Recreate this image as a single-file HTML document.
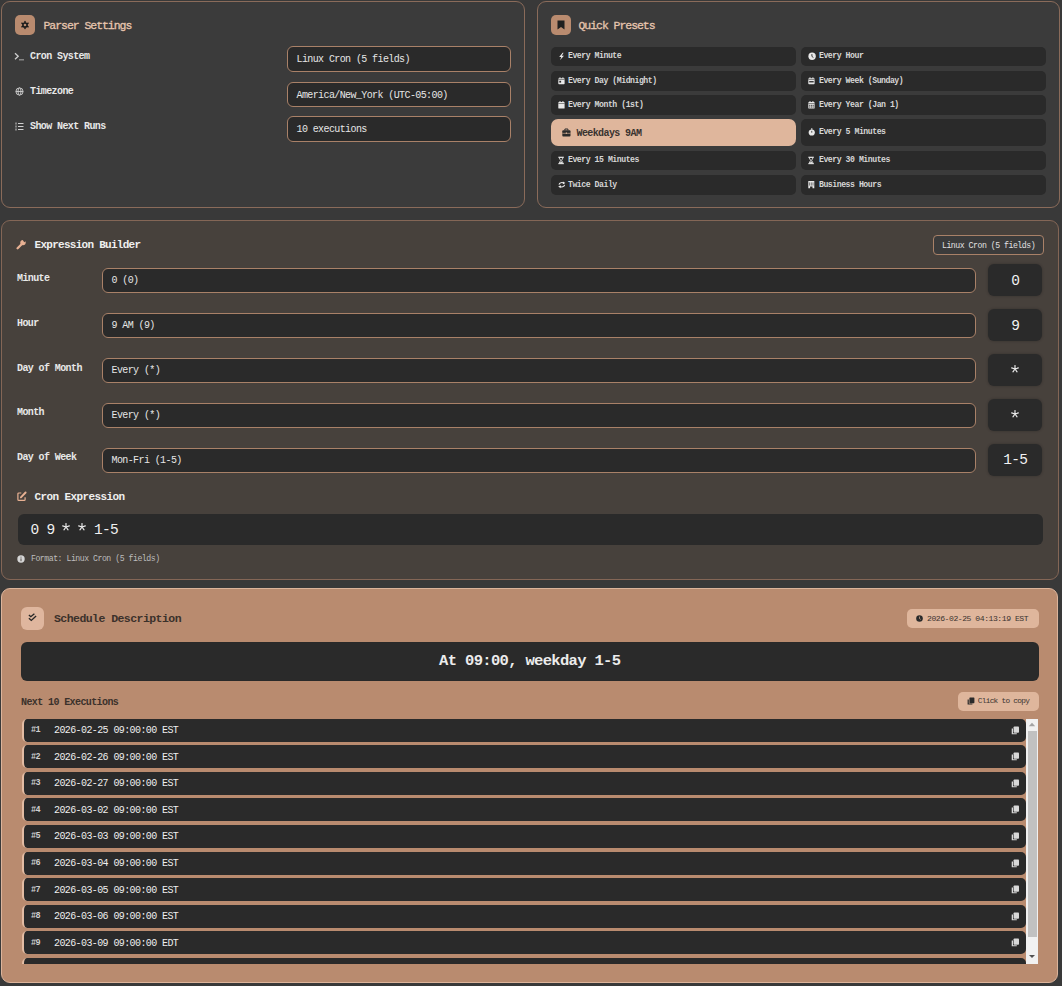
<!DOCTYPE html>
<html><head><meta charset="utf-8">
<style>
*{box-sizing:border-box;margin:0;padding:0}
html,body{width:1062px;height:986px;overflow:hidden;background:#393939}
body{position:relative;font-family:"Liberation Mono", monospace;color:#e6e6e6}
.a{position:absolute;white-space:nowrap}
.panel{position:absolute;border:1px solid #8a6b5a;border-radius:9px;background:#3b3b3b}
.ibox{position:absolute;width:20px;height:20px;border-radius:5px;background:#b98b6f}
.ibox svg{position:absolute}
.title{position:absolute;font-size:11.5px;line-height:12px;letter-spacing:-1.05px;color:#e6c5ae;-webkit-text-stroke:0.3px #e6c5ae;white-space:nowrap}
.lbl{position:absolute;font-size:10px;line-height:11px;letter-spacing:-0.6px;font-weight:bold;color:#e8e8e8;white-space:nowrap}
.inp{position:absolute;background:#2a2a2a;border:1px solid #a98168;border-radius:6px;white-space:nowrap}
.inp span{position:absolute;font-size:10px;line-height:11px;letter-spacing:-0.6px;color:#e6e6e6}
.pb{position:absolute;background:#2a2a2a;border-radius:5px;white-space:nowrap}
.pb span{position:absolute;font-size:8.2px;line-height:9px;letter-spacing:-0.48px;font-weight:bold;color:#d6d6d6}
.pb svg{position:absolute}
.val{position:absolute;background:#2a2a2a;border-radius:6px;width:54.4px;height:31.8px;box-shadow:0 0 2px 1px rgba(0,0,0,.12)}
.val span{position:absolute;left:0;width:54.4px;text-align:center;font-size:14.5px;line-height:16px;letter-spacing:-0.75px;color:#f2f2f2}
.item{position:absolute;left:21.5px;width:1004.5px;height:23px;background:#2a2a2a;border-radius:5px;border-left:2px solid #e3bca3}
.item .n{position:absolute;left:7.5px;top:7.5px;font-size:8.5px;line-height:9px;letter-spacing:-0.6px;font-weight:bold;color:#cfcfcf}
.item .d{position:absolute;left:30.5px;top:6.5px;font-size:10px;line-height:11px;letter-spacing:-0.6px;color:#eeeeee}
.item svg{position:absolute;left:987px;top:7px}
</style></head><body>
<div class="panel" style="left:1px;top:1px;width:524px;height:207px"></div>
<div class="ibox" style="left:15px;top:15px"><svg style="left:5px;top:5px" width="10" height="10" viewBox="0 0 10 10"><g fill="#1c1c1c"><rect x="4.3" y="0.9" width="1.4" height="2.2" transform="rotate(0 5 5)"/><rect x="4.3" y="0.9" width="1.4" height="2.2" transform="rotate(60 5 5)"/><rect x="4.3" y="0.9" width="1.4" height="2.2" transform="rotate(120 5 5)"/><rect x="4.3" y="0.9" width="1.4" height="2.2" transform="rotate(180 5 5)"/><rect x="4.3" y="0.9" width="1.4" height="2.2" transform="rotate(240 5 5)"/><rect x="4.3" y="0.9" width="1.4" height="2.2" transform="rotate(300 5 5)"/></g><circle cx="5" cy="5" r="2.1" fill="none" stroke="#1c1c1c" stroke-width="1.5"/></svg></div>
<div class="title" style="left:43.5px;top:19.5px">Parser Settings</div>
<svg class="a" style="left:14px;top:52px" width="11" height="9" viewBox="0 0 11 9"><path d="M1 1.2l3.2 3L1 7.2" fill="none" stroke="#cfcfcf" stroke-width="1.3"/><rect x="5" y="7.2" width="5" height="1.2" fill="#9a9a9a"/></svg>
<svg class="a" style="left:14.5px;top:86.5px" width="9" height="9" viewBox="0 0 9 9"><g fill="none" stroke="#d0d0d0" stroke-width="0.9"><circle cx="4.5" cy="4.5" r="3.6"/><ellipse cx="4.5" cy="4.5" rx="1.5" ry="3.6"/><path d="M0.9 4.5h7.2"/></g></svg>
<svg class="a" style="left:14.5px;top:121.5px" width="9" height="9" viewBox="0 0 9 9"><g fill="#cfcfcf"><rect x="0.5" y="0.5" width="1" height="2"/><rect x="0.5" y="3.5" width="1" height="2"/><rect x="0.5" y="6.5" width="1" height="2"/><rect x="3" y="1" width="5.5" height="1"/><rect x="3" y="4" width="5.5" height="1"/><rect x="3" y="7" width="5.5" height="1"/></g></svg>
<div class="lbl" style="left:30px;top:51px">Cron System</div>
<div class="lbl" style="left:30px;top:86px">Timezone</div>
<div class="lbl" style="left:30px;top:121px">Show Next Runs</div>
<div class="inp" style="left:287px;top:46px;width:224px;height:26px"><span style="left:8.5px;top:7.0px">Linux Cron (5 fields)</span></div>
<div class="inp" style="left:287px;top:82px;width:224px;height:25px"><span style="left:8.5px;top:6.5px">America/New_York (UTC-05:00)</span></div>
<div class="inp" style="left:287px;top:116px;width:224px;height:26px"><span style="left:8.5px;top:7.0px">10 executions</span></div>
<div class="panel" style="left:537px;top:1px;width:522.5px;height:207px"></div>
<div class="ibox" style="left:551px;top:15px"><svg style="left:6px;top:5px" width="8" height="10" viewBox="0 0 8 10"><path d="M0.5 0.5h7v9L4 7 0.5 9.5z" fill="#1f1f1f"/></svg></div>
<div class="title" style="left:578.5px;top:19.5px">Quick Presets</div>
<div class="pb" style="left:551px;top:46.5px;width:245px;height:19.5px"><svg style="left:7px;top:5.55px" width="8" height="9" viewBox="0 0 8 9"><path d="M4.6 0.8L1.2 4.9h2.1L2.1 8l3.9-4.3H3.8L5.6 0.8z" fill="#e8e8e8"/></svg><span style="left:17px;top:4.55px">Every Minute</span></div>
<div class="pb" style="left:801px;top:46.5px;width:245px;height:19.5px"><svg style="left:7px;top:5.55px" width="8" height="9" viewBox="0 0 8 9"><circle cx="4.1" cy="4.2" r="3.7" fill="#e8e8e8"/><path d="M3.9 2.1v2.3l1.5 1.1" stroke="#2a2a2a" stroke-width="0.9" fill="none"/></svg><span style="left:18px;top:4.55px">Every Hour</span></div>
<div class="pb" style="left:551px;top:71px;width:245px;height:19.5px"><svg style="left:7px;top:5.55px" width="8" height="9" viewBox="0 0 8 9"><rect x="0.3" y="1.2" width="6.3" height="6" rx="0.7" fill="#e8e8e8"/><rect x="1.5" y="0.35" width="1" height="1.4" fill="#e8e8e8"/><rect x="4.4" y="0.35" width="1" height="1.4" fill="#e8e8e8"/><rect x="0.3" y="2.5" width="6.3" height="0.5" fill="#2a2a2a"/><rect x="1.3" y="3.8" width="1.8" height="1.8" fill="#2a2a2a"/></svg><span style="left:17px;top:4.55px">Every Day (Midnight)</span></div>
<div class="pb" style="left:801px;top:71px;width:245px;height:19.5px"><svg style="left:7px;top:5.55px" width="8" height="9" viewBox="0 0 8 9"><rect x="0.3" y="1.2" width="6.3" height="6" rx="0.7" fill="#e8e8e8"/><rect x="1.5" y="0.35" width="1" height="1.4" fill="#e8e8e8"/><rect x="4.4" y="0.35" width="1" height="1.4" fill="#e8e8e8"/><rect x="0.3" y="2.5" width="6.3" height="0.5" fill="#2a2a2a"/><rect x="1.2" y="4.1" width="4.5" height="1.3" fill="#2a2a2a"/></svg><span style="left:18px;top:4.55px">Every Week (Sunday)</span></div>
<div class="pb" style="left:551px;top:95.25px;width:245px;height:19.5px"><svg style="left:7px;top:5.55px" width="8" height="9" viewBox="0 0 8 9"><rect x="0.3" y="1.0" width="6.3" height="6.6" rx="0.7" fill="#e8e8e8"/><rect x="1.5" y="0.1" width="1" height="1.4" fill="#e8e8e8"/><rect x="4.4" y="0.1" width="1" height="1.4" fill="#e8e8e8"/><rect x="0.3" y="2.4" width="6.3" height="0.5" fill="#2a2a2a"/></svg><span style="left:17px;top:4.55px">Every Month (1st)</span></div>
<div class="pb" style="left:801px;top:95.25px;width:245px;height:19.5px"><svg style="left:7px;top:5.55px" width="8" height="9" viewBox="0 0 8 9"><rect x="0.3" y="1.0" width="6.3" height="6.6" rx="0.7" fill="#e8e8e8"/><rect x="1.5" y="0.1" width="1" height="1.4" fill="#e8e8e8"/><rect x="4.4" y="0.1" width="1" height="1.4" fill="#e8e8e8"/><rect x="0.3" y="2.4" width="6.3" height="0.5" fill="#2a2a2a"/><path d="M1.1 4.3h1.2M2.9 4.3h1.2M4.6 4.3h1.2M1.1 6h1.2M2.9 6h1.2M4.6 6h1.2" stroke="#2a2a2a" stroke-width="0.9"/></svg><span style="left:18px;top:4.55px">Every Year (Jan 1)</span></div>
<div class="pb" style="left:551px;top:119.2px;width:245px;height:26.8px;background:#dfb69c;border-radius:7px"><svg style="left:10.5px;top:8.5px" width="9" height="9" viewBox="0 0 9 9"><rect x="0.3" y="2.3" width="8.2" height="6.2" rx="0.9" fill="#2b2b2b"/><path d="M2.9 2.5V1h3v1.5" fill="none" stroke="#2b2b2b" stroke-width="1"/><rect x="0.3" y="4.9" width="8.2" height="0.6" fill="#dfb69c"/><rect x="3.8" y="4.5" width="1.2" height="1.3" fill="#dfb69c"/></svg><span style="left:25.5px;top:9px;font-size:10px;line-height:11px;letter-spacing:-0.6px;color:#3a3330">Weekdays 9AM</span></div>
<div class="pb" style="left:801px;top:119.2px;width:245px;height:26.8px"><svg style="left:7px;top:9.200000000000001px" width="8" height="9" viewBox="0 0 8 9"><circle cx="3.75" cy="4.5" r="3.1" fill="#e8e8e8"/><rect x="3.1" y="0.3" width="1.3" height="1.4" fill="#e8e8e8"/><path d="M3.75 2.9v1.8" stroke="#2a2a2a" stroke-width="0.8"/></svg><span style="left:18px;top:8.200000000000001px">Every 5 Minutes</span></div>
<div class="pb" style="left:551px;top:150.5px;width:245px;height:19.5px"><svg style="left:7px;top:5.55px" width="8" height="9" viewBox="0 0 8 9"><path d="M0.3 1.2h5.6M0.3 7.7h5.6" stroke="#e8e8e8" stroke-width="0.9"/><path d="M1 1.5h4.2L3.6 4.4l1.6 3H1l1.6-3z" fill="none" stroke="#e8e8e8" stroke-width="0.85"/><path d="M1.6 7.2l1.5-2 1.5 2z" fill="#e8e8e8"/></svg><span style="left:17px;top:4.55px">Every 15 Minutes</span></div>
<div class="pb" style="left:801px;top:150.5px;width:245px;height:19.5px"><svg style="left:7px;top:5.55px" width="8" height="9" viewBox="0 0 8 9"><path d="M0.3 1.2h5.6M0.3 7.7h5.6" stroke="#e8e8e8" stroke-width="0.9"/><path d="M1 1.5h4.2L3.6 4.4l1.6 3H1l1.6-3z" fill="none" stroke="#e8e8e8" stroke-width="0.85"/><path d="M1.6 7.2l1.5-2 1.5 2z" fill="#e8e8e8"/></svg><span style="left:18px;top:4.55px">Every 30 Minutes</span></div>
<div class="pb" style="left:551px;top:175px;width:245px;height:19.5px"><svg style="left:7px;top:5.55px" width="8" height="9" viewBox="0 0 8 9"><path d="M1 3.6A2.9 2.5 0 0 1 5.9 2.3M6.6 3.9A2.9 2.5 0 0 1 1.7 5.2" fill="none" stroke="#e8e8e8" stroke-width="1.1"/><path d="M4.9 0.4l2.5 1.6-2.5 1.3zM2.7 7.2L0.2 5.6l2.5-1.3z" fill="#e8e8e8"/></svg><span style="left:17px;top:4.55px">Twice Daily</span></div>
<div class="pb" style="left:801px;top:175px;width:245px;height:19.5px"><svg style="left:7px;top:5.55px" width="8" height="9" viewBox="0 0 8 9"><path d="M0.3 0.1h6v7.1h-1.8v-1.6h-2.4v1.6H0.3z" fill="#e8e8e8"/><path d="M1.6 1.4v3.2M3.3 1.4v3.2M5 1.4v3.2" stroke="#2a2a2a" stroke-width="0.6"/></svg><span style="left:18px;top:4.55px">Business Hours</span></div>
<div class="panel" style="left:1px;top:219.5px;width:1058px;height:360.5px;background:#47413c;border-color:#846656"></div>
<svg class="a" style="left:16px;top:238.5px" width="11" height="11" viewBox="0 0 11 11"><path d="M1.6 9.2L5.6 5.2" stroke="#e8b193" stroke-width="2.3" stroke-linecap="round"/><circle cx="7" cy="3.6" r="2.7" fill="#e8b193"/><rect x="7.4" y="0.2" width="2.4" height="2.6" transform="rotate(45 8.6 1.5)" fill="#47413c"/></svg>
<div class="a" style="left:34.5px;top:239px;font-size:11px;line-height:12px;letter-spacing:-0.72px;font-weight:bold;color:#efefef">Expression Builder</div>
<div class="inp" style="left:933px;top:235px;width:111.2px;height:20px;background:#3b3b3b;border-radius:4px"><span style="left:8px;top:4.5px;font-size:8.2px;line-height:9px;letter-spacing:-0.48px;color:#e2e2e2">Linux Cron (5 fields)</span></div>
<div class="lbl" style="left:17px;top:272.75px">Minute</div>
<div class="inp" style="left:102px;top:267.95px;width:874px;height:25.4px"><span style="left:8.5px;top:6.5px">0 (0)</span></div>
<div class="val" style="left:988px;top:264.45px"><span style="top:8.3px">0</span></div>
<div class="lbl" style="left:17px;top:317.65px">Hour</div>
<div class="inp" style="left:102px;top:312.84999999999997px;width:874px;height:25.4px"><span style="left:8.5px;top:6.5px">9 AM (9)</span></div>
<div class="val" style="left:988px;top:309.34999999999997px"><span style="top:8.3px">9</span></div>
<div class="lbl" style="left:17px;top:362.55px">Day of Month</div>
<div class="inp" style="left:102px;top:357.75px;width:874px;height:25.4px"><span style="left:8.5px;top:6.5px">Every (*)</span></div>
<div class="val" style="left:988px;top:354.25px"><svg style="position:absolute;left:22.8px;top:10.5px" width="8" height="8" viewBox="0 0 8 8"><path d="M4 4L4 0.5M4 4L7.33 2.92M4 4L6.06 6.83M4 4L1.94 6.83M4 4L0.67 2.92" stroke="#eeeeee" stroke-width="1.15" stroke-linecap="round"/></svg></div>
<div class="lbl" style="left:17px;top:407.45px">Month</div>
<div class="inp" style="left:102px;top:402.65px;width:874px;height:25.4px"><span style="left:8.5px;top:6.5px">Every (*)</span></div>
<div class="val" style="left:988px;top:399.15px"><svg style="position:absolute;left:22.8px;top:10.5px" width="8" height="8" viewBox="0 0 8 8"><path d="M4 4L4 0.5M4 4L7.33 2.92M4 4L6.06 6.83M4 4L1.94 6.83M4 4L0.67 2.92" stroke="#eeeeee" stroke-width="1.15" stroke-linecap="round"/></svg></div>
<div class="lbl" style="left:17px;top:452.35px">Day of Week</div>
<div class="inp" style="left:102px;top:447.55px;width:874px;height:25.4px"><span style="left:8.5px;top:6.5px">Mon-Fri (1-5)</span></div>
<div class="val" style="left:988px;top:444.05px"><span style="top:8.3px">1-5</span></div>
<svg class="a" style="left:16.5px;top:490.5px" width="10" height="10" viewBox="0 0 10 10"><path d="M4.3 2H1.8A0.9 0.9 0 0 0 0.9 2.9V8.5A0.9 0.9 0 0 0 1.8 9.4H7.2A0.9 0.9 0 0 0 8.1 8.5V6.2" fill="none" stroke="#e8b193" stroke-width="1.2"/><path d="M3.9 6.4L8.6 1.5" stroke="#e8b193" stroke-width="1.9" stroke-linecap="round"/></svg>
<div class="a" style="left:34.5px;top:490.5px;font-size:11px;line-height:12px;letter-spacing:-0.6px;font-weight:bold;color:#efefef">Cron Expression</div>
<div class="a" style="left:18px;top:513.5px;width:1025px;height:31.5px;background:#2a2a2a;border-radius:6px"></div>
<div class="a" style="left:30.5px;top:521.5px;font-size:14.5px;line-height:16px;letter-spacing:-0.75px;color:#f0f0f0">0 9 &nbsp; &nbsp; 1-5</div>
<div class="a" style="left:62.4px;top:523.2px;width:8px;height:8px"><svg style="position:absolute;left:0px;top:0px" width="8" height="8" viewBox="0 0 8 8"><path d="M4 4L4 0.5M4 4L7.33 2.92M4 4L6.06 6.83M4 4L1.94 6.83M4 4L0.67 2.92" stroke="#eeeeee" stroke-width="1.15" stroke-linecap="round"/></svg></div>
<div class="a" style="left:78.1px;top:523.2px;width:8px;height:8px"><svg style="position:absolute;left:0px;top:0px" width="8" height="8" viewBox="0 0 8 8"><path d="M4 4L4 0.5M4 4L7.33 2.92M4 4L6.06 6.83M4 4L1.94 6.83M4 4L0.67 2.92" stroke="#eeeeee" stroke-width="1.15" stroke-linecap="round"/></svg></div>
<svg class="a" style="left:16.5px;top:555.4px" width="8" height="8" viewBox="0 0 8 8"><circle cx="4" cy="4" r="3.7" fill="#d6d6d6"/><rect x="3.55" y="3.4" width="0.9" height="2.8" fill="#47413c"/><rect x="3.55" y="1.7" width="0.9" height="0.9" fill="#47413c"/></svg>
<div class="a" style="left:31px;top:554px;font-size:8.2px;line-height:9px;letter-spacing:-0.48px;color:#bdbdbd">Format: Linux Cron (5 fields)</div>
<div class="panel" style="left:1px;top:587.5px;width:1057px;height:395.8px;background:#b98b6f;border-color:#dcb49b"></div>
<div class="a" style="left:21px;top:607px;width:23px;height:23px;border-radius:6px;background:#dfb69e"></div>
<svg class="a" style="left:28.2px;top:613px" width="9" height="9" viewBox="0 0 9 9"><path d="M0.9 2l1.9 1.7L6.4 0.7M0.9 5.2l2.4 2.2L8.1 3" fill="none" stroke="#262626" stroke-width="1.35"/></svg>
<div class="a" style="left:54px;top:613px;font-size:11.5px;line-height:12px;letter-spacing:-0.55px;font-weight:bold;color:#3b312b">Schedule Description</div>
<div class="a" style="left:907px;top:609px;width:131.5px;height:19.4px;border-radius:5px;background:#dfb69c"></div>
<svg class="a" style="left:916px;top:615px" width="7" height="7" viewBox="0 0 7 7"><circle cx="3.5" cy="3.5" r="3.3" fill="#2a2a2a"/><path d="M3.5 1.6v2l1.2 0.8" stroke="#dfb69c" stroke-width="0.7" fill="none"/></svg>
<div class="a" style="left:927px;top:614px;font-size:8.1px;line-height:9px;letter-spacing:-0.46px;color:#3b3430">2026-02-25 04:13:19 EST</div>
<div class="a" style="left:21px;top:641.5px;width:1017.5px;height:39px;background:#2a2a2a;border-radius:6px;border:1px solid rgba(40,40,40,.55)"></div>
<div class="a" style="left:21px;top:653px;width:1017.5px;text-align:center;font-size:15.5px;line-height:16px;letter-spacing:-0.67px;font-weight:bold;color:#ececec">At 09:00, weekday 1-5</div>
<div class="a" style="left:21px;top:697px;font-size:10px;line-height:11px;letter-spacing:-0.6px;font-weight:bold;color:#3b312b">Next 10 Executions</div>
<div class="a" style="left:958px;top:692px;width:80.5px;height:18.5px;border-radius:5px;background:#dfb69c"></div>
<svg class="a" style="left:967px;top:697px" width="8" height="8" viewBox="0 0 8 8"><path d="M0.6 2.4h1.2v4.2h3.6v1H0.6z" fill="#2a2a2a"/><rect x="2.4" y="0.4" width="5" height="5.8" rx="0.6" fill="#2a2a2a"/></svg>
<div class="a" style="left:977.8px;top:697.2px;font-size:7.8px;line-height:8px;letter-spacing:-0.73px;color:#3b3430">Click to copy</div>
<div class="a" style="left:0;top:718.5px;width:1062px;height:245.5px;overflow:hidden">
<div class="item" style="top:0.0px"><span class="n">#1</span><span class="d">2026-02-25 09:00:00 EST</span><svg width="9" height="9" viewBox="0 0 9 9"><path d="M0.7 2.6h1.3v4.6h3.8v1.1H0.7z" fill="#d8d8d8"/><rect x="2.6" y="0.5" width="5.4" height="6.2" rx="0.8" fill="#d8d8d8"/></svg></div>
<div class="item" style="top:26.6px"><span class="n">#2</span><span class="d">2026-02-26 09:00:00 EST</span><svg width="9" height="9" viewBox="0 0 9 9"><path d="M0.7 2.6h1.3v4.6h3.8v1.1H0.7z" fill="#d8d8d8"/><rect x="2.6" y="0.5" width="5.4" height="6.2" rx="0.8" fill="#d8d8d8"/></svg></div>
<div class="item" style="top:53.2px"><span class="n">#3</span><span class="d">2026-02-27 09:00:00 EST</span><svg width="9" height="9" viewBox="0 0 9 9"><path d="M0.7 2.6h1.3v4.6h3.8v1.1H0.7z" fill="#d8d8d8"/><rect x="2.6" y="0.5" width="5.4" height="6.2" rx="0.8" fill="#d8d8d8"/></svg></div>
<div class="item" style="top:79.80000000000001px"><span class="n">#4</span><span class="d">2026-03-02 09:00:00 EST</span><svg width="9" height="9" viewBox="0 0 9 9"><path d="M0.7 2.6h1.3v4.6h3.8v1.1H0.7z" fill="#d8d8d8"/><rect x="2.6" y="0.5" width="5.4" height="6.2" rx="0.8" fill="#d8d8d8"/></svg></div>
<div class="item" style="top:106.4px"><span class="n">#5</span><span class="d">2026-03-03 09:00:00 EST</span><svg width="9" height="9" viewBox="0 0 9 9"><path d="M0.7 2.6h1.3v4.6h3.8v1.1H0.7z" fill="#d8d8d8"/><rect x="2.6" y="0.5" width="5.4" height="6.2" rx="0.8" fill="#d8d8d8"/></svg></div>
<div class="item" style="top:133.0px"><span class="n">#6</span><span class="d">2026-03-04 09:00:00 EST</span><svg width="9" height="9" viewBox="0 0 9 9"><path d="M0.7 2.6h1.3v4.6h3.8v1.1H0.7z" fill="#d8d8d8"/><rect x="2.6" y="0.5" width="5.4" height="6.2" rx="0.8" fill="#d8d8d8"/></svg></div>
<div class="item" style="top:159.60000000000002px"><span class="n">#7</span><span class="d">2026-03-05 09:00:00 EST</span><svg width="9" height="9" viewBox="0 0 9 9"><path d="M0.7 2.6h1.3v4.6h3.8v1.1H0.7z" fill="#d8d8d8"/><rect x="2.6" y="0.5" width="5.4" height="6.2" rx="0.8" fill="#d8d8d8"/></svg></div>
<div class="item" style="top:186.20000000000002px"><span class="n">#8</span><span class="d">2026-03-06 09:00:00 EST</span><svg width="9" height="9" viewBox="0 0 9 9"><path d="M0.7 2.6h1.3v4.6h3.8v1.1H0.7z" fill="#d8d8d8"/><rect x="2.6" y="0.5" width="5.4" height="6.2" rx="0.8" fill="#d8d8d8"/></svg></div>
<div class="item" style="top:212.8px"><span class="n">#9</span><span class="d">2026-03-09 09:00:00 EDT</span><svg width="9" height="9" viewBox="0 0 9 9"><path d="M0.7 2.6h1.3v4.6h3.8v1.1H0.7z" fill="#d8d8d8"/><rect x="2.6" y="0.5" width="5.4" height="6.2" rx="0.8" fill="#d8d8d8"/></svg></div>
<div class="item" style="top:239.4px"><span class="n">#10</span><span class="d">2026-03-10 09:00:00 EDT</span><svg width="9" height="9" viewBox="0 0 9 9"><path d="M0.7 2.6h1.3v4.6h3.8v1.1H0.7z" fill="#d8d8d8"/><rect x="2.6" y="0.5" width="5.4" height="6.2" rx="0.8" fill="#d8d8d8"/></svg></div>
</div>
<div class="a" style="left:1026px;top:718.5px;width:12.2px;height:245.5px;background:#f1f1f1"></div>
<div class="a" style="left:1028px;top:730.5px;width:9px;height:206.5px;background:#c1c1c1"></div>
<svg class="a" style="left:1026px;top:719px" width="12" height="10" viewBox="0 0 12 10"><path d="M2.8 7.2h6.4L6 3.8z" fill="#a3a3a3"/></svg>
<svg class="a" style="left:1026px;top:952px" width="12" height="10" viewBox="0 0 12 10"><path d="M3 3h6L6 6z" fill="#505050"/></svg>
</body></html>
